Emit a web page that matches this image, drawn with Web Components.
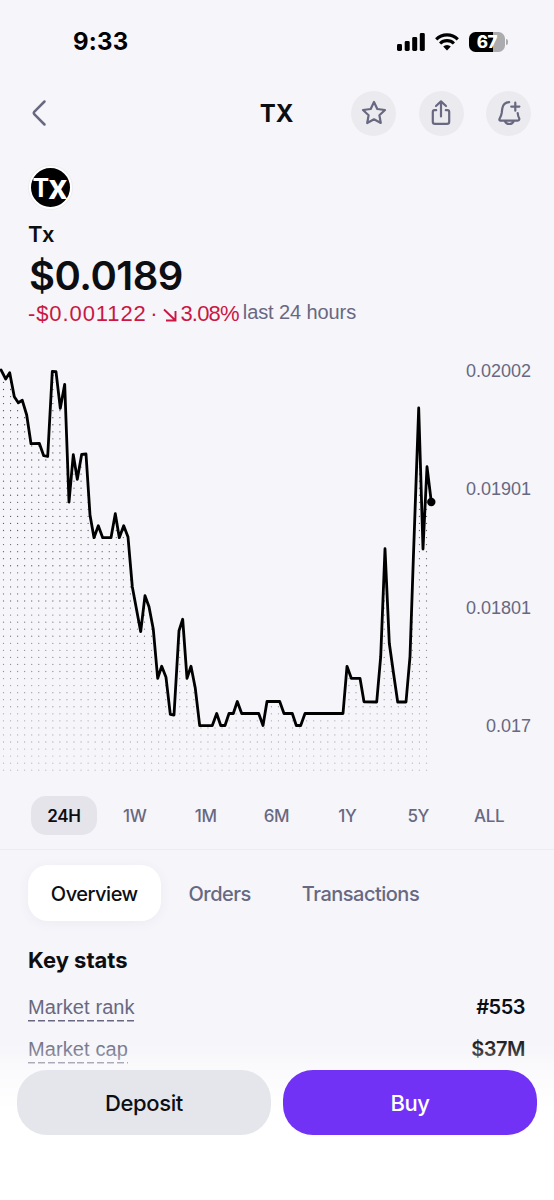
<!DOCTYPE html>
<html lang="en">
<head>
<meta charset="utf-8">
<title>TX</title>
<style>
body{
	margin: 0;
	font-family: Inter, "Liberation Sans", sans-serif;
	--light-font: "Liberation Sans", Arial, sans-serif;
	--ink: #0d0e12;
	--muted: #686880;
	--page: #f5f5fa;
	--red: #ca1744;
	--accent: #7132f5;
}
</style>
</head>
<body>
<asset-screen></asset-screen>
<script>
const define = (name, html, setup) => {
	const template = document.createElement('template');
	template.innerHTML = html;
	customElements.define(name, class extends HTMLElement{
		constructor(){
			super();
			this.attachShadow({mode: 'open'});
			this.shadowRoot.appendChild(template.content.cloneNode(true));
		}
		connectedCallback(){
			if(setup)
				setup(this, this.shadowRoot);
		}
	});
};

define('status-bar', `
<style>
:host{
	display: flex;
	align-items: center;
	justify-content: space-between;
	height: 83px;
	padding: 0 46px 0 73px;
	box-sizing: border-box;
	color: #000;
}
.time{
	font-size: 24px;
	font-weight: 700;
	letter-spacing: .2px;
}
.icons{
	display: flex;
	align-items: center;
}
svg{
	display: block;
}
.wifi{
	margin: 0 10px 0 10px;
}
.battery{
	display: flex;
	align-items: center;
	justify-content: center;
	width: 36px;
	height: 20px;
	border-radius: 6.5px;
	background: linear-gradient(90deg, #000 67%, #acacaf 67%);
	color: #fff;
	font-size: 17px;
	font-weight: 800;
	letter-spacing: -.3px;
}
.cap{
	width: 2px;
	height: 6px;
	margin-left: 1px;
	border-radius: 0 2px 2px 0;
	background: #acacaf;
}
</style>
<span class="time">9:33</span>
<div class="icons">
	<svg width="28" height="18" viewBox="0 0 28 18"><rect y="11" width="5" height="7" rx="1.4"/><rect x="7.7" y="8" width="5" height="10" rx="1.4"/><rect x="15.2" y="4" width="5" height="14" rx="1.4"/><rect x="22.8" y="0" width="5" height="18" rx="1.4"/></svg>
	<svg class="wifi" width="24" height="18" viewBox="0 0 24 18" fill="none" stroke="#000" stroke-width="3.1"><path d="M1.2 6.3a15.4 15.4 0 0 1 21.600 0"/><path d="M5.1 10.5a9.8 9.8 0 0 1 13.800 0"/><path d="M8.2 13.6a5.4 5.4 0 0 1 7.600 0L12 17.4z" fill="#000" stroke="none"/></svg>
	<div class="battery">67</div>
	<div class="cap"></div>
</div>
`);

define('round-button', `
<style>
:host{
	display: flex;
	align-items: center;
	justify-content: center;
	width: 45px;
	height: 45px;
	border-radius: 50%;
	background: #ebebef;
}
</style>
<slot></slot>
`);

define('nav-bar', `
<style>
:host{
	display: grid;
	grid-template-columns: 1fr auto 1fr;
	align-items: center;
	height: 60px;
	padding: 0 23px 0 31px;
}
svg{
	display: block;
	fill: none;
	stroke: var(--muted);
	stroke-width: 2.2;
	stroke-linecap: round;
	stroke-linejoin: round;
}
.back{
	stroke-width: 2.5;
}
.title{
	color: var(--ink);
	font-size: 24px;
	font-weight: 700;
	padding-right: 9px;
}
.actions{
	display: flex;
	justify-content: flex-end;
	gap: 22.5px;
}
</style>
<svg class="back" width="16" height="28" viewBox="0 0 16 28"><path d="M13.500 2.500L3.200 12.800q-1 1.200 0 2.400L13.500 25.500"/></svg>
<span class="title">TX</span>
<div class="actions">
	<round-button><svg width="28" height="28" viewBox="0 0 28 28"><path d="M14 3l3.300 7 7.700 1-5.600 5.300 1.400 7.700-6.800-3.700L7.200 24l1.400-7.700L3 11l7.700-1z"/></svg></round-button>
	<round-button><svg width="28" height="28" viewBox="0 0 28 28"><path d="M14 17.500V2.500M9 7l5-4.600L19 7M9.200 11.200H7.500Q5.800 11.200 5.800 13v9.700Q5.800 24.800 8 24.800h12q2.200 0 2.200-2.100V13q0-1.800-1.700-1.800h-1.700"/></svg></round-button>
	<round-button><svg width="28" height="28" viewBox="0 0 28 28"><path d="M14.200 3.200Q8.300 3.500 7.300 9.500L6.700 14Q6.200 17 4.700 19.500q-1 2 1 2.200h17q2-.3 1.500-2.400Q22.900 17 22.700 14M9.800 22q1.200 3 4.500 3t4.500-3M20.300 3.500v8.200M16.200 7.600h8.200"/></svg></round-button>
</div>
`);

define('asset-header', `
<style>
:host{
	display: flex;
	flex-direction: column;
	align-items: flex-start;
	height: 203px;
	padding: 23px 28px 0;
	box-sizing: border-box;
	color: var(--ink);
	white-space: nowrap;
}
.logo{
	width: 39px;
	height: 39px;
	margin-left: 1px;
	border: 2px solid #fff;
	border-radius: 50%;
	background: #000;
	box-shadow: 0 0 0 1px #ececf0;
}
.logo svg{
	display: block;
	overflow: visible;
}
.name{
	margin-top: 12px;
	font-size: 22px;
	line-height: 27px;
	font-weight: 600;
	letter-spacing: .3px;
}
.price{
	margin: 4px 0 0 1px;
	font-size: 40px;
	line-height: 48px;
	font-weight: 600;
	letter-spacing: -.5px;
}
.change{
	display: flex;
	align-items: center;
	height: 28px;
	color: var(--red);
	font-family: var(--light-font);
	font-size: 22px;
}
.delta{
	letter-spacing: .9px;
	word-spacing: -3.5px;
}
.change svg{
	margin: 1px 3px 0 5px;
}
.percent{
	letter-spacing: -.8px;
}
.period{
	margin: -3px 0 0 4px;
	color: var(--muted);
	font-size: 20px;
	letter-spacing: -.1px;
}
</style>
<div class="logo"><svg width="39" height="39" viewBox="0 0 39 39" fill="#fff" font-family="Inter" font-weight="700"><text x="1.500" y="29" font-size="25">T</text><text x="17" y="31" font-size="34">x</text></svg></div>
<span class="name">Tx</span>
<span class="price">$0.0189</span>
<div class="change">
	<span class="delta">-$0.001122 ·</span>
	<svg width="14" height="14" viewBox="0 0 14 14" fill="none" stroke="#ca1744" stroke-width="1.9"><path d="M1 1.500l11 10.500M12.500 3v9.500H3"/></svg>
	<span class="percent">3.08%</span>
	<span class="period">last 24 hours</span>
</div>
`);

// Points of the price line, in chart pixels
const LINE = [
	[1, 15], [5.7, 24], [9.7, 17.7], [14.3, 41.7], [18.3, 47.7], [22.3, 45.3], [26.7, 60], [31, 88.7],
	[39.3, 88.3], [43.7, 100.7], [47.7, 101.5], [52.3, 16.5], [56, 16.7], [60.3, 53.3], [64.7, 29.3],
	[69, 147], [73.3, 99.7], [77.3, 124.3], [81.7, 99.3], [86, 99], [90, 160], [94, 182.7],
	[98.3, 170.7], [102.7, 182.7], [111, 182.7], [115.3, 158.7], [119.3, 182.7], [123.7, 170.7],
	[128, 182], [132.3, 231.7], [136.3, 253.3], [140.7, 276.7], [145, 240.7], [149, 251.7],
	[153.3, 274.3], [157.7, 323.3], [161.7, 311.3], [166, 322.3], [170.3, 359.3], [174, 360],
	[179, 275.7], [182.7, 264.3], [187, 323.3], [191, 311.3], [195.3, 333.3], [199.7, 370.7],
	[212.3, 370.5], [216.7, 358.5], [220.7, 370.5], [225, 370.5], [229, 358.5], [233.3, 358.5],
	[237.3, 346.5], [241.7, 358.5], [258.7, 358.5], [263, 370.5], [267, 346.5], [279.7, 346.5],
	[284, 358.5], [292.3, 358.5], [296.3, 370.5], [300.7, 370.5], [305, 358.5], [343, 358.5],
	[347, 311.3], [351.3, 323.3], [360, 323.3], [364, 346.8], [376.7, 347], [380.7, 301.7],
	[385, 193.7], [389.3, 288.3], [393.3, 316.7], [397.7, 347], [406, 347], [410, 301.7],
	[413.3, 205], [418.7, 53], [423, 194], [427, 111.7], [431.3, 147]
];

define('price-chart', `
<style>
:host{
	display: flex;
	height: 425px;
	margin-top: 9px;
}
svg{
	display: block;
	flex: none;
}
.scale{
	display: flex;
	flex: 1;
	flex-direction: column;
	justify-content: space-between;
	align-items: flex-end;
	height: 382px;
	padding: 5px 23px 0 0;
	box-sizing: border-box;
	color: var(--muted);
	font-family: var(--light-font);
	font-size: 18px;
	line-height: 22px;
}
</style>
<svg width="440" height="425" viewBox="0 0 440 425">
	<defs>
		<clipPath id="area"><path class="area"/></clipPath>
		<linearGradient id="fade" x1="0" y1="0" x2="0" y2="425" gradientUnits="userSpaceOnUse"><stop offset="0" stop-color="#45454e"/><stop offset=".5" stop-color="#66666f"/><stop offset="1" stop-color="#c0c0c6"/></linearGradient>
	</defs>
	<g clip-path="url(#area)"><path class="dots" stroke="url(#fade)" stroke-width="1.3" stroke-linecap="round"/></g>
	<path class="line" fill="none" stroke="#000" stroke-width="2.8" stroke-linecap="round" stroke-linejoin="round"/>
	<circle cx="431.300" cy="147" r="4.200"/>
</svg>
<div class="scale"><span>0.02002</span><span>0.01901</span><span>0.01801</span><span>0.017</span></div>
`, (host, root) => {
	const line = 'M' + LINE.map(point => point.join(' ')).join('L');
	root.querySelector('.line').setAttribute('d', line);
	root.querySelector('.area').setAttribute('d', `${line}V417H0V15z`);
	let dots = '';
	for(let row = 0; row < 58; row++){
		for(let col = 0; col < 61; col++)
			dots += `M${(3.5 + col * 7.05).toFixed(2)} ${(415.2 - row * 7.05).toFixed(2)}h.01`;
	}
	root.querySelector('.dots').setAttribute('d', dots);
});

define('range-picker', `
<style>
:host{
	display: grid;
	grid-template-columns: repeat(7, 1fr);
	height: 70px;
	padding: 16px 29.5px 0 28.5px;
	box-sizing: border-box;
	border-bottom: 1px solid #ececf1;
	color: var(--muted);
	font-size: 17px;
	font-weight: 500;
	letter-spacing: -.4px;
}
::slotted(span){
	display: flex;
	align-items: center;
	justify-content: center;
	height: 39px;
	margin: 0 2px;
	border-radius: 15px;
}
::slotted([selected]){
	background: #e4e4ea;
	color: var(--ink);
	font-weight: 600;
}
</style>
<slot></slot>
`);

define('tab-strip', `
<style>
:host{
	display: flex;
	padding: 15px 28px 0;
	color: var(--muted);
	font-size: 20px;
	font-weight: 500;
	letter-spacing: -.5px;
}
::slotted(span){
	display: flex;
	align-items: center;
	justify-content: center;
	height: 56px;
	padding-top: 1px;
	box-sizing: border-box;
}
::slotted([selected]){
	width: 132.5px;
	border-radius: 20px;
	background: #fff;
	box-shadow: 0 2px 12px rgba(80, 80, 120, .06);
	color: var(--ink);
}
</style>
<slot></slot>
`);

define('stat-row', `
<style>
:host{
	display: flex;
	justify-content: space-between;
	align-items: flex-start;
	height: 42px;
	padding: 0 29px 0 28px;
	font-size: 20px;
	line-height: 26px;
	color: var(--muted);
}
.label{
	height: 28px;
	font-family: var(--light-font);
	letter-spacing: .1px;
	background: repeating-linear-gradient(90deg, var(--muted) 0 7px, transparent 7px 9.9px) 0 100% / 100% 1.5px no-repeat;
}
.value{
	color: var(--ink);
	font-weight: 600;
	letter-spacing: -.5px;
}
</style>
<div class="label"><slot></slot></div>
<span class="value"><slot name="value"></slot></span>
`);

define('key-stats', `
<style>
:host{
	display: block;
}
h2{
	margin: 25px 28px 19.5px;
	color: var(--ink);
	font-size: 22px;
	line-height: 28px;
	font-weight: 700;
}
</style>
<h2>Key stats</h2>
<slot></slot>
`);

define('action-bar', `
<style>
:host{
	position: absolute;
	left: 0;
	right: 0;
	bottom: 0;
	display: grid;
	grid-template-columns: 1fr 1fr;
	gap: 12px;
	height: 180px;
	padding: 50px 17px 65px;
	box-sizing: border-box;
	background: linear-gradient(rgba(255, 255, 255, 0) 12px, rgba(255, 255, 255, .15) 30px, rgba(255, 255, 255, .5) 45px, #fff 90px);
	font-size: 22px;
	font-weight: 500;
	letter-spacing: -.4px;
}
::slotted(span){
	display: flex;
	align-items: center;
	justify-content: center;
	border-radius: 30px;
	background: #e5e6eb;
	color: var(--ink);
}
::slotted([primary]){
	background: var(--accent);
	color: #fff;
}
</style>
<slot></slot>
`);

define('asset-screen', `
<style>
:host{
	display: block;
	position: relative;
	width: 554px;
	height: 1200px;
	overflow: hidden;
	background: var(--page);
}
</style>
<status-bar></status-bar>
<nav-bar></nav-bar>
<asset-header></asset-header>
<price-chart></price-chart>
<range-picker><span selected>24H</span><span>1W</span><span>1M</span><span>6M</span><span>1Y</span><span>5Y</span><span>ALL</span></range-picker>
<tab-strip><span selected>Overview</span><span style="margin-left:28px">Orders</span><span style="margin-left:51px">Transactions</span></tab-strip>
<key-stats>
	<stat-row>Market rank<span slot="value">#553</span></stat-row>
	<stat-row>Market cap<span slot="value">$37M</span></stat-row>
</key-stats>
<action-bar><span>Deposit</span><span primary>Buy</span></action-bar>
`);
</script>
</body>
</html>
